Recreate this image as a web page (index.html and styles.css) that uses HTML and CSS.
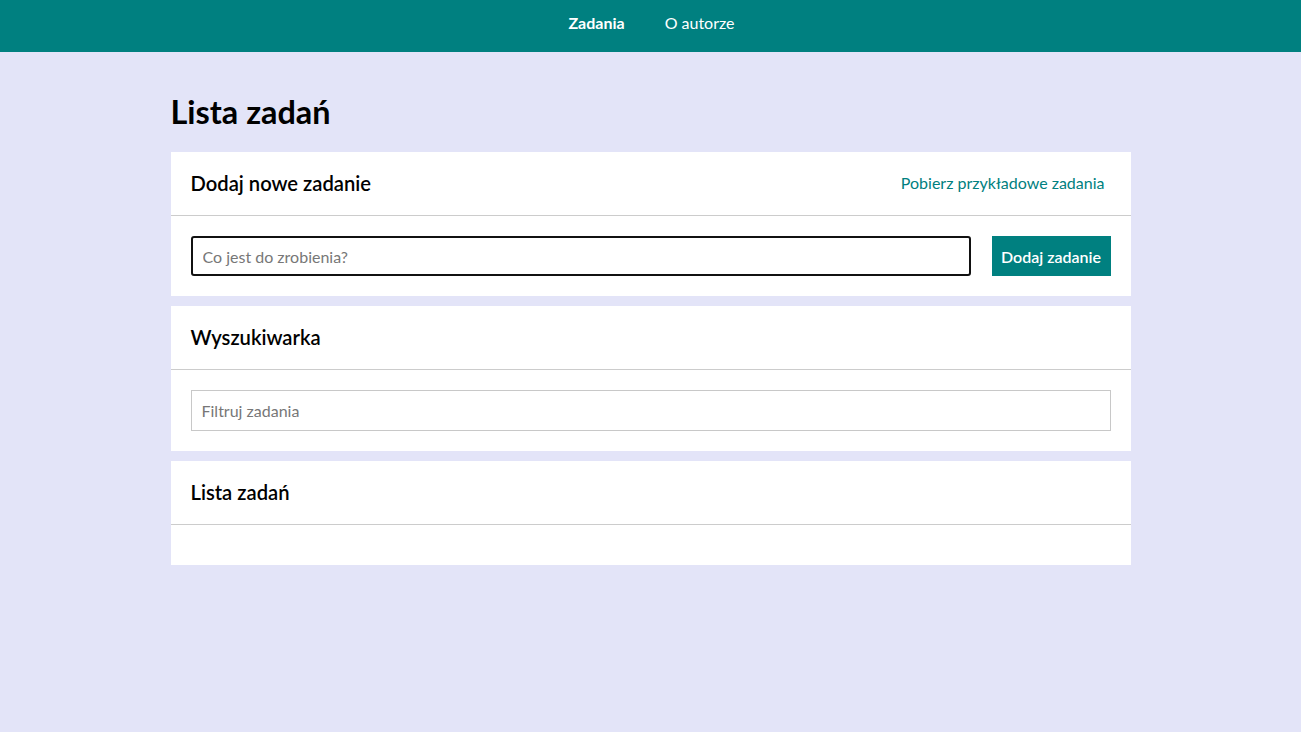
FILE: index.html
```html
<!DOCTYPE html>
<html lang="pl">
<head>
<meta charset="utf-8">
<title>Lista zadań</title>
<link rel="stylesheet" href="styles.css">
</head>
<body>
<nav class="nav">
  <a class="nav-link active" href="#">Zadania</a>
  <a class="nav-link" href="#">O autorze</a>
</nav>
<main class="container">
  <h1 class="title">Lista zadań</h1>
  <section class="card">
    <div class="card-header">
      <h2 class="card-title">Dodaj nowe zadanie</h2>
      <a class="card-link" href="#">Pobierz przykładowe zadania</a>
    </div>
    <div class="card-body row">
      <input class="input input-focus" type="text" placeholder="Co jest do zrobienia?">
      <button class="btn">Dodaj zadanie</button>
    </div>
  </section>
  <section class="card">
    <div class="card-header">
      <h2 class="card-title">Wyszukiwarka</h2>
    </div>
    <div class="card-body">
      <input class="input input-plain" type="text" placeholder="Filtruj zadania">
    </div>
  </section>
  <section class="card">
    <div class="card-header">
      <h2 class="card-title">Lista zadań</h2>
    </div>
    <div class="card-body empty"></div>
  </section>
</main>
</body>
</html>
```
FILE: styles.css
```css
* { box-sizing: border-box; }
html, body { margin: 0; padding: 0; }
body {
  background: #e3e4f8;
  font-family: Lato, "Open Sans", sans-serif;
  color: #000;
  min-height: 732px;
}
.nav {
  height: 52px;
  background: #008080;
  display: flex;
  justify-content: center;
  align-items: center;
  gap: 40px;
  padding: 0 0 7px 2px;
}
.nav-link {
  color: #fff;
  text-decoration: none;
  font-size: 16px;
}
.nav-link.active { font-weight: 700; }
.container {
  width: 960px;
  margin: 0 auto;
  padding-top: 40px;
}
.title {
  margin: 0 0 20px;
  font-size: 32.4px;
  line-height: 40px;
  font-weight: 700;
}
.card {
  background: #fff;
  margin-bottom: 10px;
}
.card-header {
  height: 64px;
  padding: 0 26px 2px 20px;
  display: flex;
  align-items: center;
  justify-content: space-between;
  border-bottom: 1px solid #cccccc;
}
.card-title {
  margin: 0;
  font-size: 20.2px;
  font-weight: 600;
}
.card-link {
  color: #008080;
  text-decoration: none;
  font-size: 16px;
}
.card-body { padding: 20px; }
.card-body.row { display: flex; gap: 21px; }
.card-body.empty { height: 40px; padding: 0; }
.input {
  font-family: inherit;
  font-size: 16px;
  height: 40px;
  padding: 0 10px;
  outline: none;
  width: 100%;
  color: #333;
}
.input::placeholder { color: #777; }
.input-focus {
  flex: 1;
  border: 2px solid #111;
  border-radius: 3px;
}
.input-plain {
  height: 41px;
  border: 1px solid #c8c8c8;
  border-radius: 0;
}
.btn {
  font-family: inherit;
  font-size: 16px;
  font-weight: 600;
  height: 40px;
  width: 119px;
  background: #008080;
  color: #fff;
  border: none;
  padding: 0;
}
```
